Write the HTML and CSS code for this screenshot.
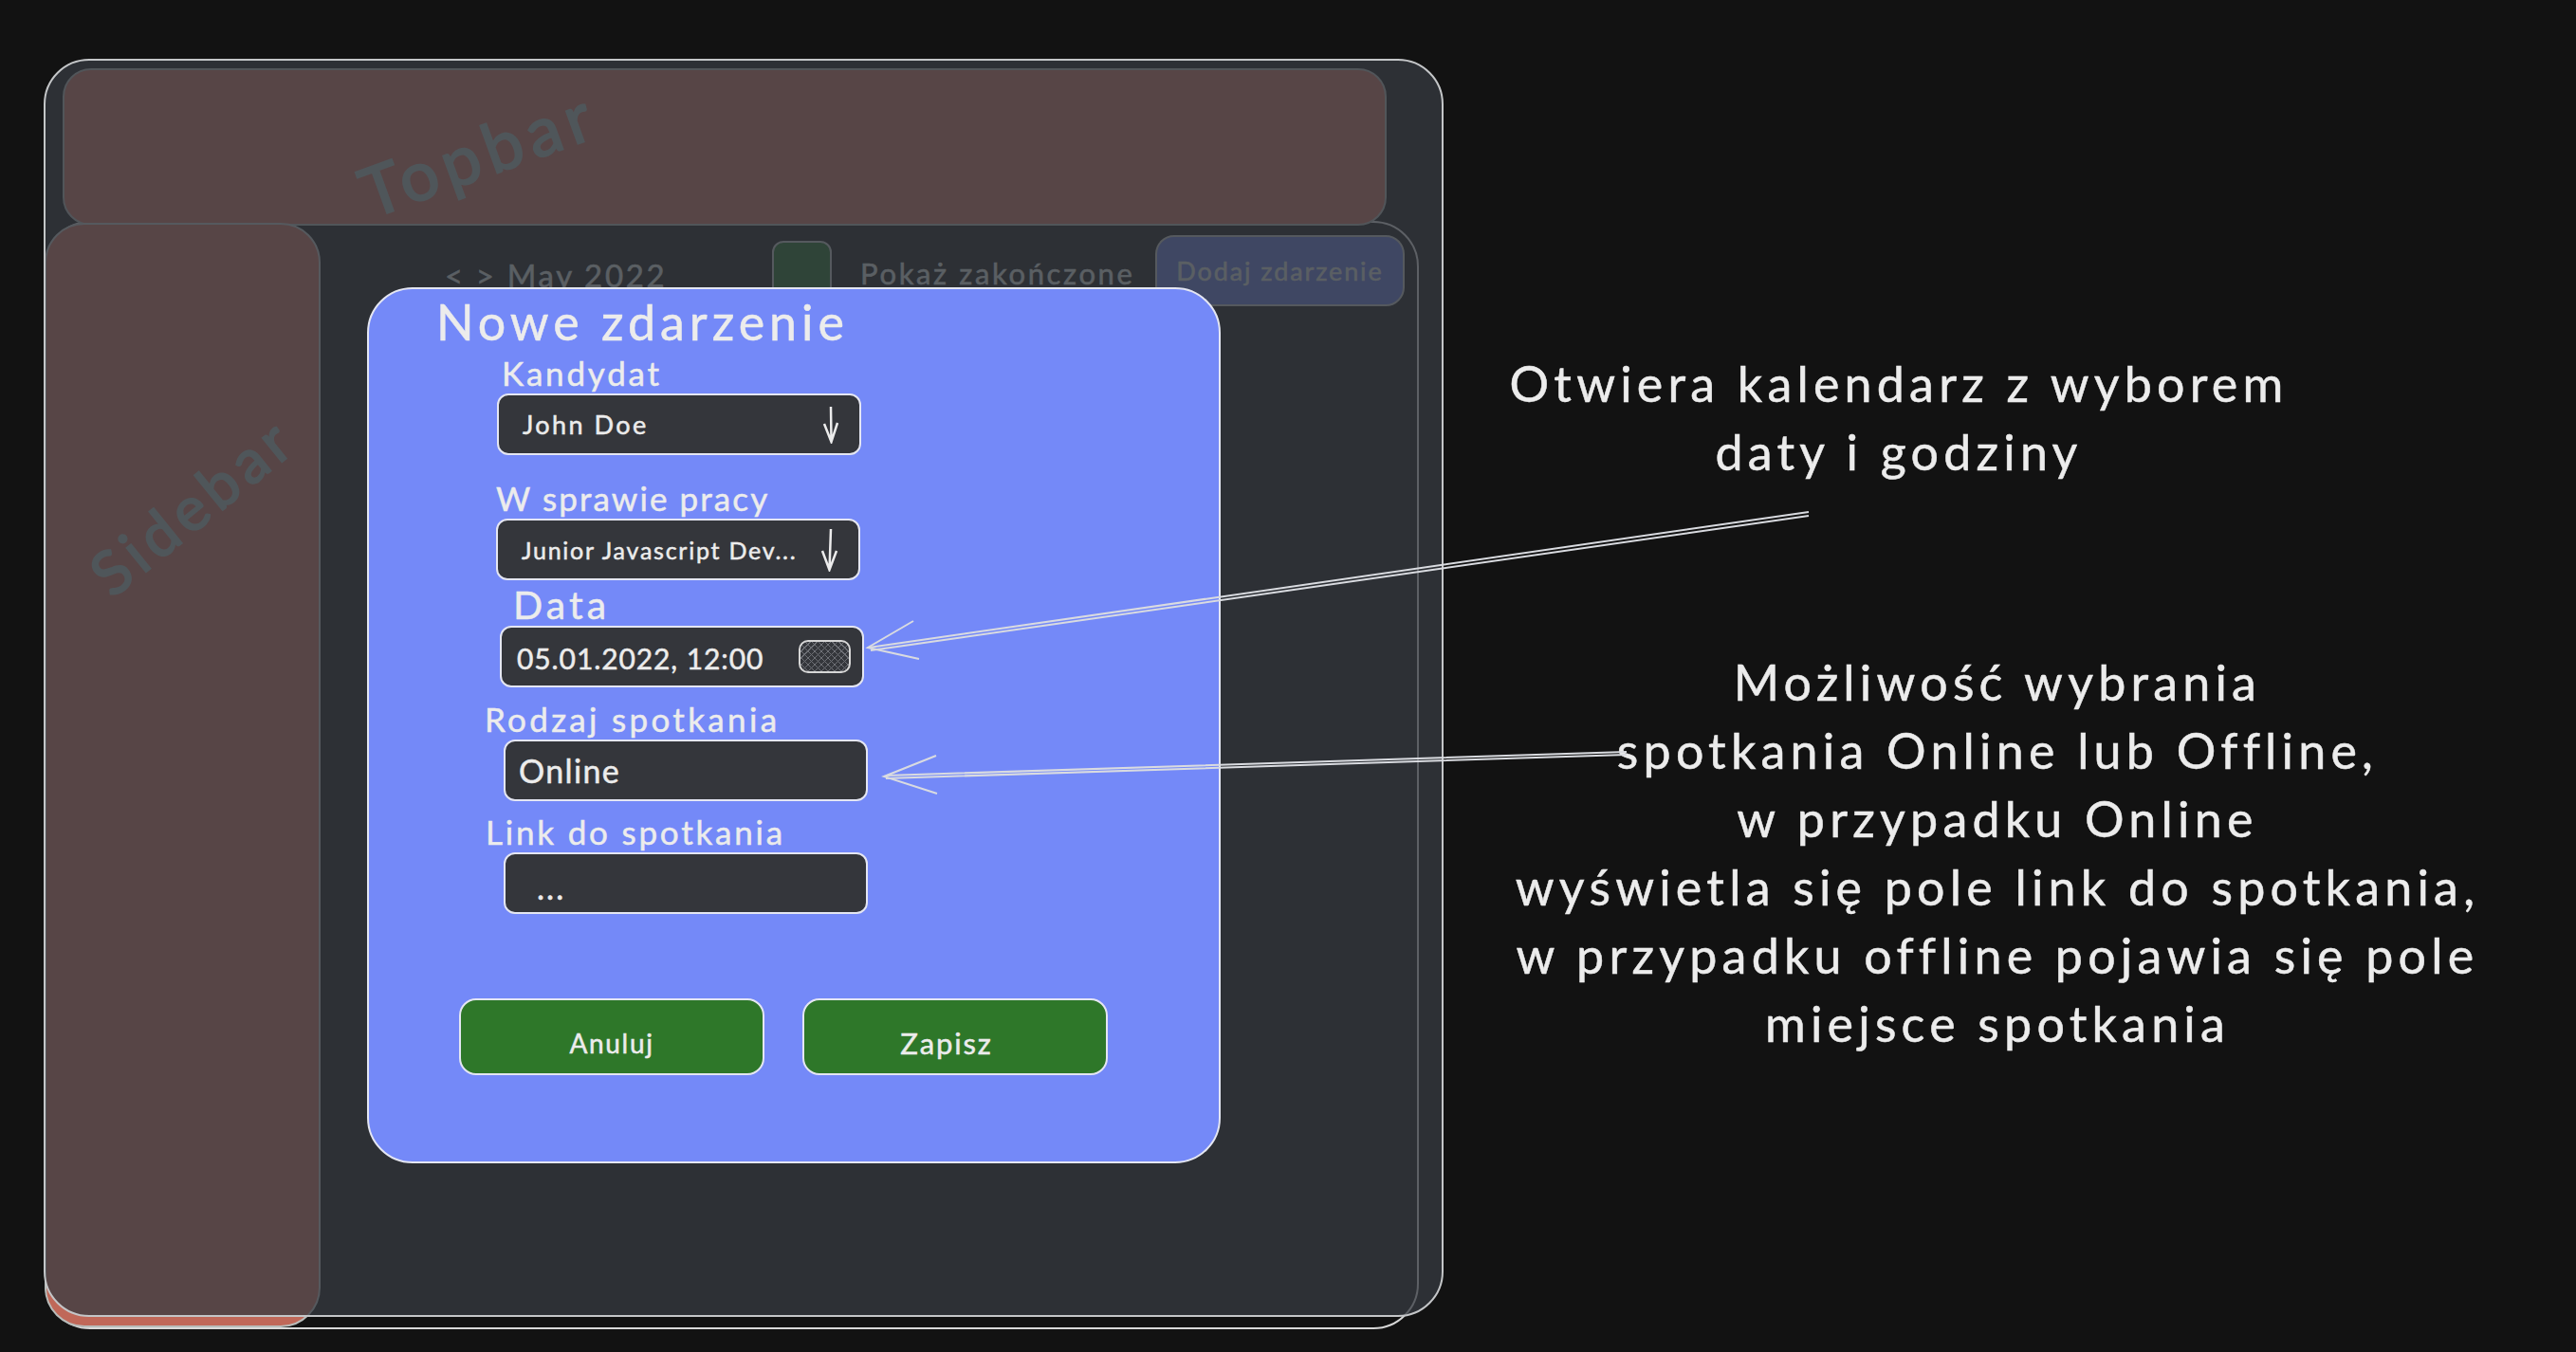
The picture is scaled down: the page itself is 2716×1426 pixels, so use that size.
FILE: index.html
```html
<!DOCTYPE html><html lang="pl"><head><meta charset="UTF-8"/>
<title>Nowe zdarzenie - szkic</title>
<link rel="stylesheet" href="styles.css"></head><body>

<div class="canvas">
  <!-- app underneath the dimming layer -->
  <div class="panel"></div>
  <div class="topbar"><span class="topbar-label">Topbar</span></div>
  <div class="sidebar"><span class="sidebar-label">Sidebar</span></div>
  <div class="toolbar">
    <span class="month">&lt; &gt; May 2022</span>
    <span class="check"></span>
    <span class="show-done">Pokaż zakończone</span>
    <span class="add-btn">Dodaj zdarzenie</span>
  </div>
  <div class="dim"></div>

  <!-- modal -->
  <form class="modal">
    <h1 class="modal-title">Nowe zdarzenie</h1>

    <div class="field f-candidate">
      <label class="field-label">Kandydat</label>
      <div class="box box-select">
        <span class="val-m">John Doe</span>
        <svg class="down" width="20" height="40" viewBox="0 0 20 40"><path d="M10 1 L10.500 38 M3 19 L10.500 38 L17 18"/></svg>
      </div>
    </div>

    <div class="field f-job">
      <label class="field-label">W sprawie pracy</label>
      <div class="box box-select">
        <span class="val-s">Junior Javascript Dev...</span>
        <svg class="down" width="20" height="46" viewBox="0 0 20 46"><path d="M11 1 L9.500 44 M2 24 L9.500 44 L17 24"/></svg>
      </div>
    </div>

    <div class="field f-date">
      <label class="field-label">Data</label>
      <div class="box box-select">
        <span class="val-m val-date">05.01.2022, 12:00</span>
        <span class="hatch"></span>
      </div>
    </div>

    <div class="field f-kind">
      <label class="field-label">Rodzaj spotkania</label>
      <div class="box"><span class="val-l">Online</span></div>
    </div>

    <div class="field f-link">
      <label class="field-label">Link do spotkania</label>
      <div class="box"><span class="val-dots">...</span></div>
    </div>

    <div class="actions">
      <button type="button" class="btn">Anuluj</button>
      <button type="button" class="btn btn-save">Zapisz</button>
    </div>
  </form>

  <!-- notes -->
  <p class="note note-date">Otwiera kalendarz z wyborem<br>daty i godziny</p>
  <p class="note note-kind">Możliwość wybrania<br>spotkania Online lub Offline,<br>w przypadku Online<br>wyświetla się pole link do spotkania,<br>w przypadku offline pojawia się pole<br>miejsce spotkania</p>

  <!-- arrows -->
  <svg class="arrows" width="2716" height="1426" viewBox="0 0 2716 1426">
    <path d="M1907 540 L916 683 M1907 544 L918 686"/>
    <path d="M963 655 L915 683 L969 695"/>
    <path d="M1715 793 L934 818 M1715 796 L934 821"/>
    <path d="M987 797 L932 819 L988 837"/>
  </svg>
</div>

</body></html>
```

FILE: styles.css
```css
/* reset */
*{box-sizing:border-box;margin:0;padding:0}
:root{--bg:#121212;--line:#e4e6f2;--text:#ececec;--dim-text:#ced4d2;--blue:#7489f8;--field:#34363b;--green:#2e7729}
body{background:var(--bg);font-family:Lato,"Noto Sans",sans-serif;color:var(--text);overflow:hidden;
     -webkit-text-stroke:.5px currentColor}
.canvas{position:relative;width:2716px;height:1426px}

/* sketched app, sits under .dim */
.panel{position:absolute;left:47px;top:233px;width:1449px;height:1169px;
       border:2px solid #d8d8d8;border-radius:48px}
.topbar{position:absolute;left:66px;top:72px;width:1396px;height:166px;
        background:#c06859;border:2px solid #a6aaa8;border-radius:30px}
.topbar-label{position:absolute;left:306px;top:46px;font-size:72px;line-height:80px;letter-spacing:.1em;
              color:#a0b0ab;-webkit-text-stroke:2px currentColor;transform:rotate(-20deg)}
.sidebar{position:absolute;left:47px;top:235px;width:291px;height:1165px;
         background:#c06859;border:2px solid #b8bcba;border-radius:42px}
.sidebar-label{position:absolute;left:26px;top:260px;font-size:64px;line-height:72px;letter-spacing:.1em;
               color:#a0b0ab;-webkit-text-stroke:2px currentColor;transform:rotate(-39deg)}

.toolbar{position:absolute;left:469px;top:248px;display:flex;align-items:center;color:var(--dim-text)}
.month{width:230px;font-size:33px;letter-spacing:.08em;margin-top:8px;white-space:nowrap}
.check{width:63px;height:63px;margin-left:115px;background:#196420;border:2px solid #b8bcba;border-radius:12px}
.show-done{width:288px;margin-left:30px;font-size:31px;letter-spacing:.085em;white-space:nowrap;margin-top:5px}
.add-btn{width:263px;height:75px;margin-left:23px;display:flex;align-items:center;justify-content:center;
         background:#5c70d2;border:2px solid #b8bcba;border-radius:20px;font-size:27px;letter-spacing:.07em;white-space:nowrap}

.dim{position:absolute;left:46px;top:62px;width:1476px;height:1327px;
     background:rgba(54,58,64,.76);border:2px solid #c4c6c8;border-radius:48px}

/* modal */
.modal{position:absolute;left:387px;top:303px;width:900px;height:924px;padding:5px 0 0 71px;
       background:var(--blue);border:2px solid var(--line);border-radius:48px}
.modal-title{font-size:52px;line-height:58px;font-weight:400;letter-spacing:.095em;white-space:nowrap;margin-bottom:7px}

.field-label{display:block;height:40px;font-size:35px;line-height:36px;letter-spacing:.08em;white-space:nowrap}
.box{width:384px;height:65px;display:flex;align-items:center;padding:0 20px 0 25px;
     background:var(--field);border:2px solid var(--line);border-radius:12px}
.box-select{justify-content:space-between}

.f-candidate .field-label{margin-left:69px}
.f-candidate .box{margin-left:64px}
.f-job{margin-top:27px}
.f-job .field-label{margin-left:63px;letter-spacing:.06em}
.f-job .box{margin-left:63px}
.f-date{margin-top:8px}
.f-date .field-label{margin-left:81px;font-size:41px;letter-spacing:.1em}
.f-date .box{margin-left:67px;padding:0 12px 0 16px}
.f-kind{margin-top:15px}
.f-kind .field-label{margin-left:51px;letter-spacing:.095em}
.f-kind .box{margin-left:71px;padding-left:14px}
.f-link{margin-top:14px}
.f-link .field-label{margin-left:52px}
.f-link .box{margin-left:71px;padding:8px 0 0 33px}

.val-s{font-size:25px;letter-spacing:.07em;white-space:nowrap}
.val-m{font-size:27px;letter-spacing:.09em;white-space:nowrap}
.val-date{font-size:30px;letter-spacing:.03em;margin-top:2px}
.val-l{font-size:34px;letter-spacing:.04em}
.val-dots{font-size:34px;letter-spacing:.06em}
.down{fill:none;stroke:var(--text);stroke-width:2.500}
.hatch{width:55px;height:35px;border:2px solid #d6d6d6;border-radius:10px;
       background:repeating-linear-gradient(45deg,#6e7076 0 1px,transparent 1px 5px),
                  repeating-linear-gradient(-45deg,#6e7076 0 1px,#34363b 1px 5px)}

.actions{display:flex;gap:40px;margin:89px 0 0 24px}
.btn{width:322px;height:81px;padding-top:12px;background:var(--green);border:2px solid var(--line);border-radius:18px;
     color:var(--text);font:28px Lato,"Noto Sans",sans-serif;letter-spacing:.06em}
.btn-save{padding-right:18px;font-size:31px}

/* notes */
.note{position:absolute;font-size:52px;line-height:72px;letter-spacing:.1em;text-align:center;white-space:nowrap}
.note-date{left:1502px;top:368px;width:1000px}
.note-kind{left:1506px;top:683px;width:1200px}

.arrows{position:absolute;left:0;top:0;pointer-events:none}
.arrows path{fill:none;stroke:#d9dbe0;stroke-width:2}
```
